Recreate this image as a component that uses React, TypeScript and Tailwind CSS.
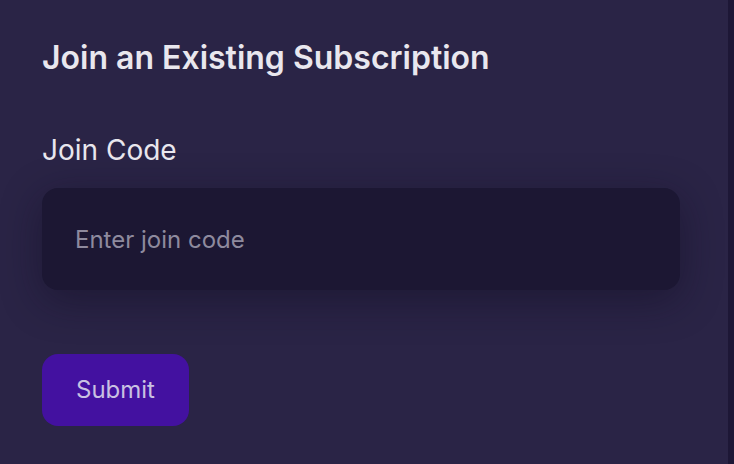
export default function App() {
  return (
    <div className="flex h-[464px] w-[734px] bg-[#1d1736] font-['Inter',sans-serif]">
      <div className="flex w-[728px] flex-col bg-[#2a2446] px-[42px] pt-[39px]">
        <h2 className="text-[32px] font-semibold leading-[38px] text-[#e9e7ee]">
          Join an Existing Subscription
        </h2>

        <label className="mt-[56px] text-[28px] leading-[34px] text-[#e9e7ee]">Join Code</label>
        <input
          type="text"
          placeholder="Enter join code"
          className="mt-[21px] h-[102px] w-[638px] rounded-2xl bg-[#1c1733] px-[33px] text-[24px] text-white placeholder-[#8e8a9e] shadow-[0_10px_40px_rgba(15,10,30,0.45)] outline-none"
        />

        <button className="mt-[64px] h-[72px] w-[147px] rounded-2xl bg-[#4311a0] text-[24px] text-[#c9c1e2]">
          Submit
        </button>
      </div>
    </div>
  );
}
